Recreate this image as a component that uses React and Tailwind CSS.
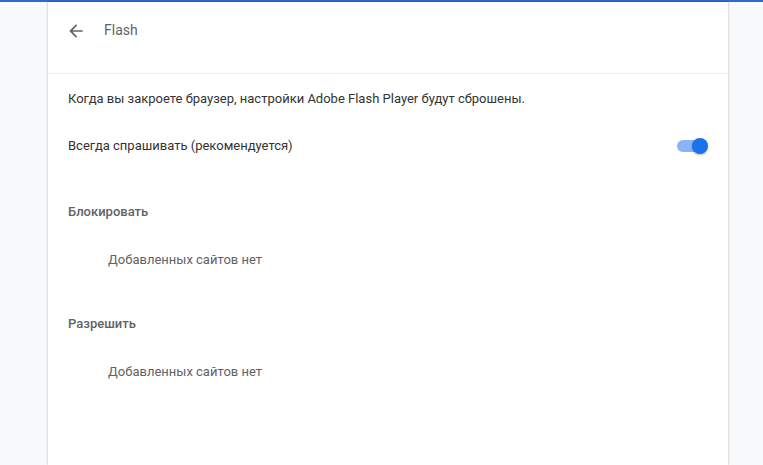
import React from "react";

const Section = ({ title }) => (
  <div className="pb-[2px]">
    <div className="h-[64px] flex items-end pb-[13px] px-[20px] text-[13px] font-medium text-[#5f6368]">{title}</div>
    <div className="h-[46px] flex items-center pl-[60px] pt-[5px] text-[13px] text-[#5f6368]">
      Добавленных сайтов нет
    </div>
  </div>
);

export default function App() {
  return (
    <div className="h-[465px] overflow-hidden bg-[#f8f9fa] flex flex-col font-['Roboto',sans-serif]">
      <div className="h-[2px] bg-[#3367d6] shrink-0" />
      <div className="flex-1 flex">
        <div className="w-[48px] shrink-0" />
        <div className="w-[680px] bg-white shadow-[0_0_2px_rgba(0,0,0,0.3)] flex flex-col">
          <div className="h-[72px] flex items-center gap-[18px] pl-[18px] pr-[20px] border-b border-[#eeeeee] pb-[14px]">
            <svg width="20" height="20" viewBox="0 0 24 24" fill="#5f6368">
              <path d="M20 11H7.83l5.59-5.59L12 4l-8 8 8 8 1.41-1.41L7.83 13H20v-2z" />
            </svg>
            <span className="text-[14px] text-[#5f6368]">Flash</span>
          </div>
          <div className="h-[48px] flex items-center px-[20px] pt-[2px] text-[13px] text-[#333333]">
            Когда вы закроете браузер, настройки Adobe Flash Player будут сброшены.
          </div>
          <div className="h-[48px] flex items-center justify-between px-[20px] text-[13px] text-[#333333]">
            <span>Всегда спрашивать (рекомендуется)</span>
            <div className="relative w-[32px] h-[16px] flex items-center">
              <div className="absolute left-[1px] w-[26px] h-[12px] rounded-full bg-[#8ab4f8]" />
              <div className="absolute right-0 w-[16px] h-[16px] rounded-full bg-[#1a73e8] shadow-[0_1px_2px_rgba(0,0,0,0.3)]" />
            </div>
          </div>
          <Section title="Блокировать" />
          <Section title="Разрешить" />
        </div>
      </div>
    </div>
  );
}
